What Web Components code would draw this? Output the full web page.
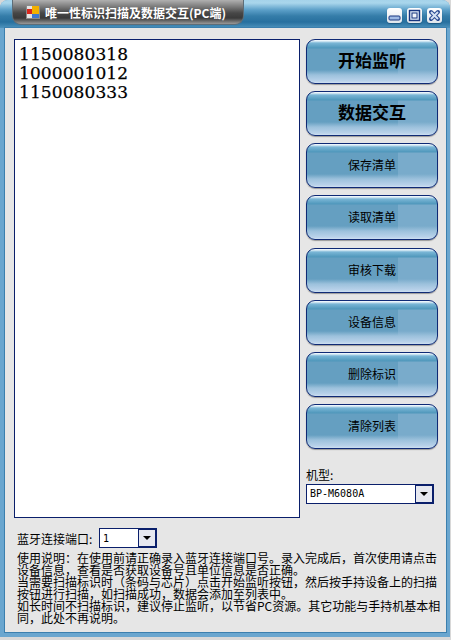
<!DOCTYPE html>
<html>
<head>
<meta charset="utf-8">
<style>
html, body { margin: 0; padding: 0; background: #d8d8d8; }
body { font: 12px "Noto Sans CJK SC", sans-serif; color: #000; }
</style>
</head>
<body>
<scan-window caption="唯一性标识扫描及数据交互(PC端)">
    <scan-list slot="list">
        <div>1150080318</div>
        <div>1000001012</div>
        <div>1150080333</div>
    </scan-list>
    <skin-button slot="actions" big>开始监听</skin-button>
    <skin-button slot="actions" big>数据交互</skin-button>
    <skin-button slot="actions">保存清单</skin-button>
    <skin-button slot="actions">读取清单</skin-button>
    <skin-button slot="actions">审核下载</skin-button>
    <skin-button slot="actions">设备信息</skin-button>
    <skin-button slot="actions">删除标识</skin-button>
    <skin-button slot="actions">清除列表</skin-button>
    <div slot="model" style="height:19px;line-height:19px">机型:</div>
    <skin-combo slot="model" value="BP-M6080A" style="width:128px"></skin-combo>
    <div slot="port" style="width:82px;white-space:nowrap">蓝牙连接端口:</div>
    <skin-combo slot="port" value="1" style="width:58px"></skin-combo>
    <div slot="help">使用说明&#xFF1A;在使用前请正确录入蓝牙连接端口号&#x3002;录入完成后&#xFF0C;首次使用请点击<br>设备信息&#xFF0C;查看是否获取设备号且单位信息是否正确&#x3002;<br>当需要扫描标识时&#xFF08;条码与芯片&#xFF09;点击开始监听按钮&#xFF0C;然后按手持设备上的扫描<br>按钮进行扫描&#xFF0C;如扫描成功&#xFF0C;数据会添加至列表中&#x3002;<br>如长时间不扫描标识&#xFF0C;建议停止监听&#xFF0C;以节省PC资源&#x3002;其它功能与手持机基本相<br>同&#xFF0C;此处不再说明&#x3002;</div>
</scan-window>

<script>
class ScanWindow extends HTMLElement {
    constructor() {
        super();
        this._root = this.attachShadow({mode: 'open'});
    }

    connectedCallback() {
        const caption = this.getAttribute('caption') || '';
        this._root.innerHTML = `
            <style>
                :host { display: flex; flex-direction: column; width: 450px; height: 637px; overflow: hidden;
                    background: #6aa6cf; border-radius: 8px 8px 0 0; }
                .bar { height: 28px; flex: none; display: flex; justify-content: space-between;
                    background: linear-gradient(#a5d3ea 0, #a9d6ec 3px, #5b9fc8 10px, #357da9 16px, #27709f 22px, #4d93bd 28px); }
                .tab { margin-left: 12px; width: 232px; height: 25px; box-sizing: border-box; flex: none;
                    padding-left: 13px; display: flex; align-items: center; gap: 5px;
                    border: 1px solid #5e6d77; border-top: 0; border-radius: 0 0 9px 9px;
                    background: linear-gradient(#b0b0b0 0, #808080 6px, #474747 13px, #3a3a3a 18px, #999 24px);
                    color: #fff; font-weight: 700; font-size: 12px; white-space: nowrap; }
                .caps { display: flex; gap: 5px; margin: 8px 8px 0 0; }
                .main { flex: 1; margin: 0 4px 5px 5px; padding: 11px 8px 0 9px; background: #e6e6e6;
                    display: flex; flex-direction: column; box-shadow: 0 0 0 1px #3b7fae; }
                .top { display: flex; gap: 6px; height: 479px; flex: none; }
                .right { width: 132px; display: flex; flex-direction: column; }
                .actions { display: flex; flex-direction: column; gap: 7.14px; }
                .model { margin-top: 16px; }
                .port { display: flex; align-items: center; margin-top: 10px; height: 20px; margin-left: 3px; }
                .help { margin: 4px 0 0 3px; font-size: 12px; line-height: 12px; white-space: nowrap; }
            </style>
            <div class="bar">
                <div class="tab">
                    <svg width="14" height="14" viewBox="0 0 14 14">
                        <rect x=".5" y=".5" width="13" height="13" fill="#e4e4e4" stroke="#8a8a8a"/>
                        <rect x="6" y="1" width="7" height="8" fill="#f2b000"/>
                        <rect x="1" y="4" width="5" height="5" fill="#d8261c"/>
                        <rect x="6" y="9" width="7" height="4" fill="#3f78d0"/>
                    </svg>
                    <span>${caption}</span>
                </div>
                <div class="caps">
                    <caption-button kind="min"></caption-button>
                    <caption-button kind="max"></caption-button>
                    <caption-button kind="close"></caption-button>
                </div>
            </div>
            <div class="main">
                <div class="top">
                    <slot name="list"></slot>
                    <div class="right">
                        <div class="actions"><slot name="actions"></slot></div>
                        <div class="model"><slot name="model"></slot></div>
                    </div>
                </div>
                <div class="port"><slot name="port"></slot></div>
                <div class="help"><slot name="help"></slot></div>
            </div>
        `;
    }
}

class CaptionButton extends HTMLElement {
    constructor() {
        super();
        this._root = this.attachShadow({mode: 'open'});
    }

    connectedCallback() {
        const glyphs = {
            min: '<rect x="2" y="8" width="11" height="4" rx="1" fill="#9db9e4" stroke="#17357f"/>',
            max: '<rect x="2.5" y="2.5" width="10" height="10" fill="#dbe6f4" stroke="#17357f" stroke-width="1.4"/><rect x="5" y="5" width="5" height="5" fill="#f2f6fb" stroke="#17357f"/>',
            close: '<path d="M4 4l7 7M11 4l-7 7" stroke="#2a4a92" stroke-width="4" stroke-linecap="round"/><path d="M4 4l7 7M11 4l-7 7" stroke="#d3e0f3" stroke-width="2"/>'
        };
        this._root.innerHTML = `
            <style>
                :host { display: block; width: 15px; height: 15px; border-radius: 3px;
                    background: linear-gradient(#fff, #e0e6ec); box-shadow: 0 1px 1px #1d5a85; }
                svg { display: block; }
            </style>
            <svg width="15" height="15" viewBox="0 0 15 15">${glyphs[this.getAttribute('kind')]}</svg>
        `;
    }
}

class ScanList extends HTMLElement {
    constructor() {
        super();
        this._root = this.attachShadow({mode: 'open'});
    }

    connectedCallback() {
        this._root.innerHTML = `
            <style>
                :host { display: block; width: 286px; height: 479px; box-sizing: border-box; background: #fff;
                    border: 1px solid #0a1f6b; padding: 5px 0 0 4px;
                    font: 17px/19px "DejaVu Serif", serif; letter-spacing: .1px;
                    -webkit-text-stroke: .25px #000; }
            </style>
            <slot></slot>
        `;
    }
}

class SkinButton extends HTMLElement {
    constructor() {
        super();
        this._root = this.attachShadow({mode: 'open'});
    }

    connectedCallback() {
        this._root.innerHTML = `
            <style>
                :host { display: flex; align-items: center; justify-content: center; width: 132px; height: 45px;
                    box-sizing: border-box; border: 1px solid #0f2a75; border-radius: 9px;
                    font-size: 12px; padding-bottom: 2px;
                    box-shadow: 0 1px 1px #9a9a9a;
                    background:
                        linear-gradient(#f4fafe 0, #e2f0f8 1px, #7ab6d6 3px, #4f97bb 8px, rgba(91,155,189,0) 9px),
                        linear-gradient(rgba(0,0,0,0) 30px, #9cc1dc 35px, #b9d2ea 41px, #d8e6f4 44px),
                        linear-gradient(90deg, #659fc1 70%, #79abcb 70%); }
                :host([big]) { font-size: 17px; font-weight: 700; padding-bottom: 4px; }
            </style>
            <slot></slot>
        `;
    }
}

class SkinCombo extends HTMLElement {
    constructor() {
        super();
        this._root = this.attachShadow({mode: 'open'});
    }

    connectedCallback() {
        this._root.innerHTML = `
            <style>
                :host { display: flex; align-items: center; justify-content: space-between; height: 20px;
                    box-sizing: border-box; background: #fff; border: 1px solid #0a1f6b;
                    font: 10px "DejaVu Sans Mono", monospace; padding-left: 3px; }
                .arrow { width: 18px; height: 18px; box-sizing: border-box; border: 1px solid #0a1f6b;
                    background: #e6e8f0; display: flex; align-items: center; justify-content: center; }
                .arrow i { display: block; width: 0; height: 0; border: 4px solid transparent;
                    border-top: 4px solid #000; border-bottom: 0; }
            </style>
            <span>${this.getAttribute('value') || ''}</span>
            <div class="arrow"><i></i></div>
        `;
    }
}

window.customElements.define('scan-window', ScanWindow);
window.customElements.define('caption-button', CaptionButton);
window.customElements.define('scan-list', ScanList);
window.customElements.define('skin-button', SkinButton);
window.customElements.define('skin-combo', SkinCombo);
</script>
</body>
</html>
